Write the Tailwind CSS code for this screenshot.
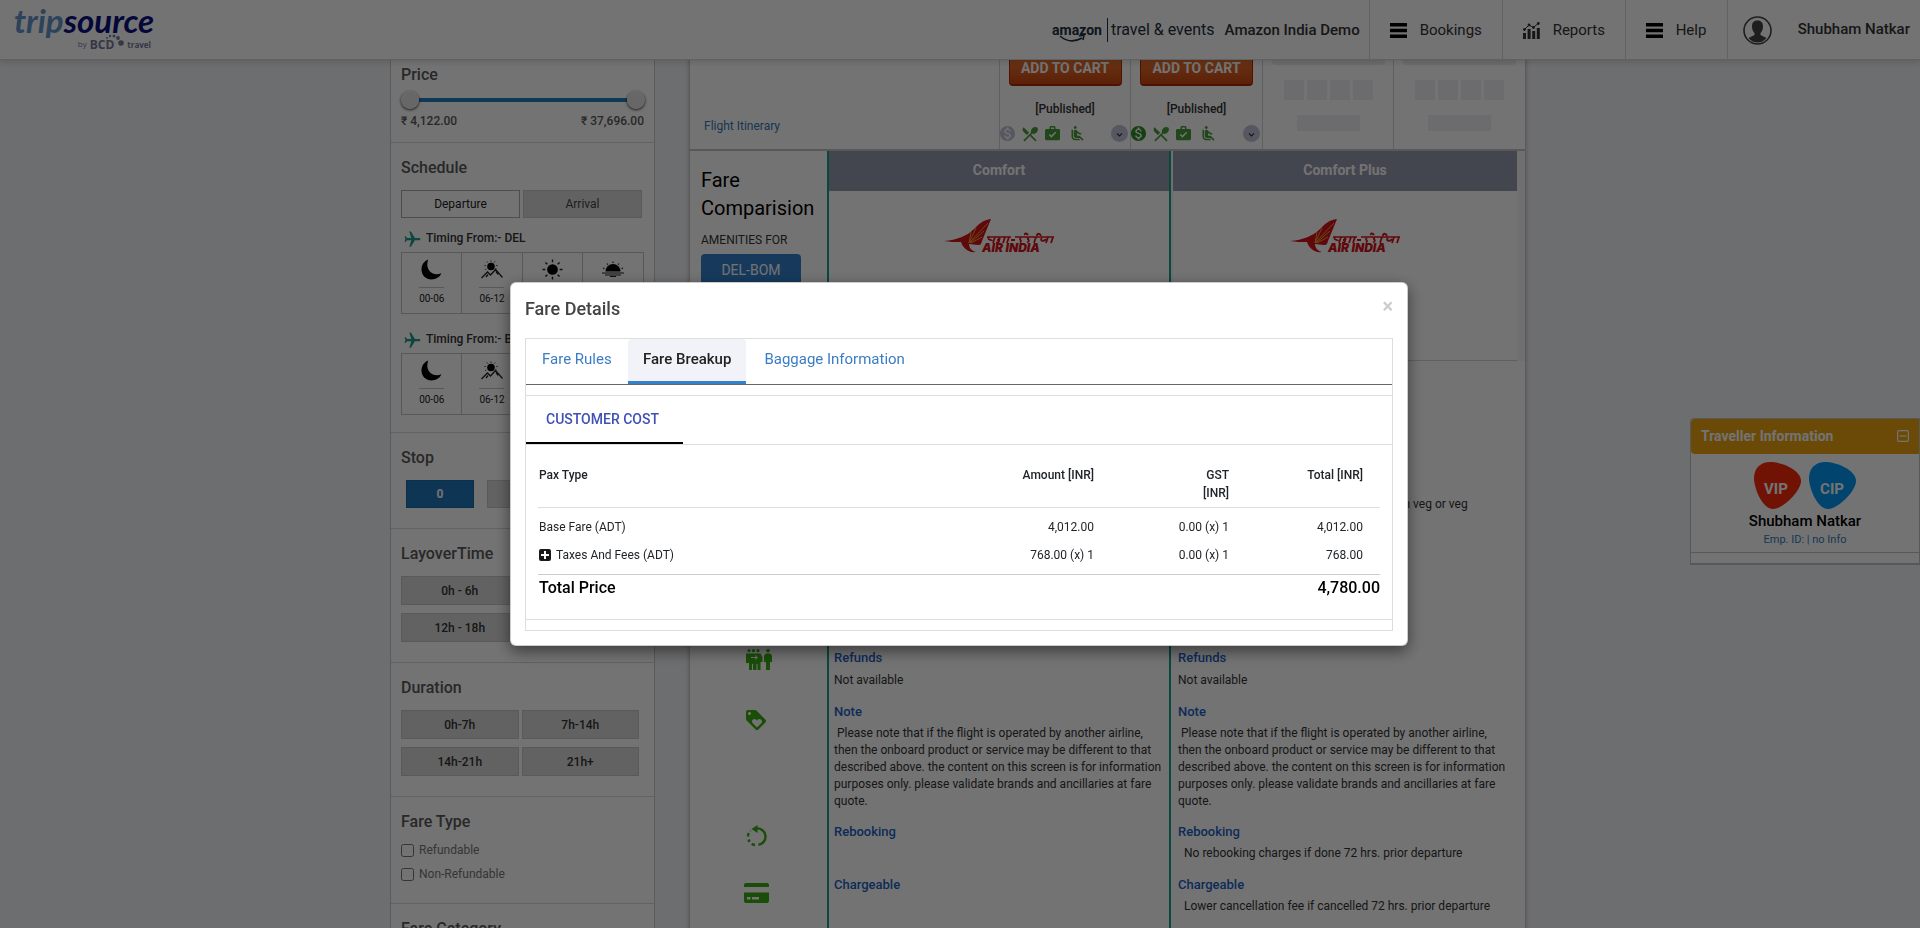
<!DOCTYPE html>
<html lang="en">
<head>
<meta charset="utf-8">
<title>tripsource – Fare Details</title>
<script src="https://cdn.jsdelivr.net/npm/@tailwindcss/browser@4"></script>
</head>
<body class="h-screen overflow-hidden flex flex-col bg-[#f2f3f6] font-['Roboto','Noto_Sans',sans-serif] text-xs text-[#333]">

<!-- shared icons -->
<svg class="hidden" aria-hidden="true">
  <symbol id="dollar" viewBox="2 2 20 20"><path d="M12 2C6.48 2 2 6.48 2 12s4.48 10 10 10 10-4.48 10-10S17.52 2 12 2zm1.41 16.09V20h-2.67v-1.93c-1.71-.36-3.16-1.46-3.27-3.4h1.96c.1 1.05.82 1.87 2.65 1.87 1.96 0 2.4-.98 2.4-1.59 0-.83-.44-1.61-2.67-2.14-2.48-.6-4.18-1.62-4.18-3.67 0-1.72 1.39-2.84 3.11-3.21V4h2.67v1.95c1.86.45 2.79 1.86 2.85 3.39H14.3c-.05-1.11-.64-1.87-2.22-1.87-1.5 0-2.4.68-2.4 1.64 0 .84.65 1.39 2.67 1.91s4.18 1.39 4.18 3.91c-.01 1.83-1.38 2.83-3.12 3.16z"/></symbol>
  <symbol id="dining" viewBox="2 2 20 20"><path d="M8.1 13.34l2.83-2.83L3.91 3.5c-1.56 1.56-1.56 4.09 0 5.66l4.19 4.18zm6.78-1.81c1.53.71 3.68.21 5.27-1.38 1.91-1.91 2.28-4.65.81-6.12-1.46-1.46-4.2-1.1-6.12.81-1.59 1.59-2.09 3.74-1.38 5.27L3.7 19.87l1.41 1.41L12 14.41l6.88 6.88 1.41-1.41L13.41 13l1.47-1.47z"/></symbol>
  <symbol id="bag" viewBox="2 2 20 20"><path d="M20 6h-4V4c0-1.1-.9-2-2-2h-4c-1.1 0-2 .9-2 2v2H4c-1.1 0-2 .9-2 2v11c0 1.1.9 2 2 2h16c1.1 0 2-.9 2-2V8c0-1.1-.9-2-2-2zM10 4h4v2h-4V4zm.5 13.5L7 14l1.41-1.41 2.09 2.08 5.09-5.09L17 11l-6.5 6.5z"/></symbol>
  <symbol id="seat" viewBox="2 2 20 20"><path d="M7.59 5.41c-.78-.78-.78-2.05 0-2.83.78-.78 2.05-.78 2.83 0 .78.78.78 2.05 0 2.83-.79.79-2.05.79-2.83 0zM6 16V7H4v9c0 2.76 2.24 5 5 5h6v-2H9c-1.66 0-3-1.34-3-3zm14 4.07L14.93 15H11.5v-3.68c1.4 1.15 3.6 2.16 5.5 2.16v-2.16c-1.66.02-3.61-.87-4.67-2.04l-1.4-1.55c-.19-.21-.43-.38-.69-.5-.29-.14-.62-.23-.96-.23h-.03C8.01 7 7 8.01 7 9.25V15c0 1.66 1.34 3 3 3h5.07l3.5 3.5L20 20.07z"/></symbol>
  <symbol id="chev" viewBox="0 0 17 17"><circle cx="8.500" cy="8.500" r="8.500" fill="#bfc2d4"/><path d="M6 8.500l2.500 2.500 2.500-2.500" fill="none" stroke="#333" stroke-width="1.100"/></symbol>
  <symbol id="plane" viewBox="0 0 24 24"><path transform="rotate(90 12 12)" d="M21 16v-2l-8-5V3.500c0-.83-.67-1.500-1.500-1.500S10 2.670 10 3.500V9l-8 5v2l8-2.500V19l-2 1.500V22l3.500-1 3.500 1v-1.500L13 19v-5.500l8 2.500z"/></symbol>
  <symbol id="moon" viewBox="0 0 22 22"><path d="M7.500.500C2.800 2.500.500 6.500.500 11c0 6 4.700 10.500 10.500 10.500 4.600 0 8.600-2.300 10.300-6.500C13 18.500 3.500 12 7.500.500z"/></symbol>
  <symbol id="sunrise" viewBox="0 0 22 18"><circle cx="10" cy="6" r="3.800"/><path d="M.500 17.500l6-6 3 3 5-5.500 7 8M7 14l-2 2.500M15 11l2 3" fill="none" stroke="currentColor" stroke-width="1.300"/><path d="M10 0v1.200M6 1l.7 1M14 1l-.7 1M3.500 5h1.200M15.300 5h1.200M4.200 9l1-.6M15.500 8.500l-1-.4" stroke="currentColor" stroke-width="1"/></symbol>
  <symbol id="sun" viewBox="0 0 22 22"><circle cx="11" cy="11" r="5.600"/><path d="M11 .500v3M11 18.500v3M.500 11h3M18.500 11h3M3.600 3.600l2 2M16.400 16.400l2 2M3.600 18.400l2-2M16.400 5.600l2-2" stroke="currentColor" stroke-width="1.500"/></symbol>
  <symbol id="sunset" viewBox="0 0 22 16"><path d="M3.500 10a7.500 7.500 0 0 1 15 0z"/><path d="M0 11.500h22M3 13.500h16" stroke="currentColor" stroke-width="1.200"/><path d="M8 15h6M11 0v1.500M5 2l.8 1.200M17 2l-.8 1.200M1 6.500l1.400.6M21 6.500l-1.400.6" stroke="currentColor" stroke-width="1.200"/></symbol>
  <symbol id="menu" viewBox="0 0 17 15"><path d="M0 0h17v3.600H0zM0 5.700h17v3.600H0zM0 11.400h17V15H0z"/></symbol>
  <symbol id="airindia" viewBox="0 0 110 34">
    <path d="M0 22c13-1 23-5 30-12 6-6 9-9 17-10l-9 22c-1 3-1 4-4 4l-9-1c0 4 3 7 7 8-8 1-13-4-15-10-6 0-11 0-17-1z" fill="#d3141b"/>
    <path d="M25 24l19-20M25 24l7-15M26 24l14-12M27 24l11-6M25 24l2-11" stroke="#f0a030" stroke-width="1" fill="none"/>
    <path d="M43 18h24M71 18h39" stroke="#d3141b" stroke-width="1.400"/>
    <path d="M45 18c-2 4 3 2 3 4M51 18l-2 6M54 19c4 1 0 2-1 2 4 0 2 3-1 2.500M61 18l-2 6M65 18l-2 6M67 21h4M77 19c-3 2 2 2-1 4.500M81 16c-1-2 2-2 3 0M85 19c-4 1 3 2-2 4.500M92 18l-2 6M93 17c0-3 3-3 4 0M98 19c-3 3 2 4 4 1M104 18l-2 6M109 18l-2 6" stroke="#d3141b" stroke-width="1.800" fill="none"/>
    <text x="38" y="33" font-family="Inter" font-size="12" font-weight="900" font-style="italic" fill="#d3141b">AIR INDIA</text>
  </symbol>
</svg>

<header class="relative z-10 h-[60px] shrink-0 flex items-stretch bg-white border-b border-[#d8d8de] shadow-[0_2px_6px_rgba(0,0,0,0.15)] text-[15px]">
  <a href="#" aria-label="tripsource by BCD travel" class="flex flex-col pl-[14px] pt-1 w-[160px]">
    <span class="font-['Lato'] font-bold italic text-[33px] leading-8 text-[#0a1080]"><span class="text-[#6494cc]">trip</span>source</span>
    <span class="flex items-center justify-end pr-[9px] h-[18px] text-[#7678a0] font-['Open_Sans'] leading-none">
      <span class="text-[8px] pr-[3px] pb-[3px]">by</span>
      <span class="relative font-bold text-xs pr-[11px]">BCD
        <svg class="absolute right-0 -top-[3px] w-[19px] h-3" viewBox="0 0 19 12" fill="currentColor"><circle cx="15" cy="9" r="2.800"/><circle cx="12" cy="4" r="1.900"/><circle cx="8" cy="2" r="1.500"/><circle cx="4" cy="2" r="1.200"/><circle cx="1" cy="4" r="1"/></svg>
      </span>
      <span class="text-[8px] font-bold pl-[2px]">travel</span>
    </span>
  </a>
  <div class="ml-auto flex items-center gap-[10px] pt-px pr-[9px]">
    <div class="flex items-center text-[#232f3e]">
      <span class="relative h-6 pr-[5px] font-bold text-[14px] leading-6">amazon
        <svg class="absolute left-[7px] top-[16px] w-[27px] h-[9px]" viewBox="0 0 27 9" fill="none" stroke="currentColor" stroke-width="1.600"><path d="M1 2c7 6 15 6 22 2M20 2l5-1-1 5"/></svg>
      </span>
      <span class="border-l border-[#232f3e] h-6 pl-[3px] text-[16px] leading-6">travel &amp; events</span>
    </div>
    <span class="font-medium pt-px">Amazon India Demo</span>
  </div>
  <nav class="flex">
    <a href="#" class="flex items-center gap-[13px] w-[133px] pt-[2px] pl-5 border-l border-[#d9d9d9]"><svg class="w-[17px] h-[15px]"><use href="#menu"/></svg>Bookings</a>
    <a href="#" class="flex items-center gap-[13px] w-[123px] pt-[2px] pl-5 border-l border-[#d9d9d9]"><svg class="w-[17px] h-[17px]" viewBox="0 0 17 17" fill="currentColor"><path d="M0 11h3v6H0zM4.600 7h3v10h-3zM9.200 9h3v8h-3zM13.800 6h3v11h-3z"/><path d="M1.500 7.500L6 3l4.500 2.500L15.500 1" stroke="currentColor" fill="none"/><circle cx="1.500" cy="7.500" r="1.400"/><circle cx="6" cy="3" r="1.400"/><circle cx="10.500" cy="5.500" r="1.400"/><circle cx="15.300" cy="1.500" r="1.400"/></svg>Reports</a>
    <a href="#" class="flex items-center gap-[13px] w-[102px] pt-[2px] pl-5 border-l border-[#d9d9d9]"><svg class="w-[17px] h-[15px]"><use href="#menu"/></svg>Help</a>
    <a href="#" class="flex items-center gap-[26px] pt-px pl-[15px] pr-[10px] border-l border-[#d9d9d9] font-medium">
      <svg class="w-[29px] h-[29px]" viewBox="0 0 29 29"><circle cx="14.500" cy="14.500" r="13.500" fill="none" stroke="#444" stroke-width="1.600"/><path d="M14.500 4.500c4 0 5.500 2.500 5.500 6 0 3-1.200 5.500-2.500 6.500v2l6 3c-2.500 3-5.500 4.500-9 4.500s-6.500-1.500-9-4.500l6-3v-2C10.200 16 9 13.500 9 10.500c0-3.500 1.500-6 5.500-6z" fill="#444"/></svg>
      Shubham Natkar</a>
  </nav>
</header>

<main class="flex-1 min-h-0 overflow-hidden">
  <div class="w-full max-w-[1140px] mx-auto flex items-start gap-[34px]">

    <!-- filters -->
    <aside class="w-[265px] shrink-0 bg-white border-x border-[#c9c9c9] text-[#444]">
      <section class="px-[10px] pt-[3px] pb-3 border-b border-[#d9d9d9]">
        <h2 class="text-base leading-6 font-medium text-[#5a5a5a]">Price</h2>
        <div class="relative h-[18px] mt-1 -mr-px flex items-center">
          <div class="w-full h-1 bg-[#2180c4]"></div>
          <input type="range" aria-label="Lowest price" min="0" max="100" value="0" class="absolute inset-0 w-full h-[18px] appearance-none bg-transparent pointer-events-none [&::-webkit-slider-thumb]:appearance-none [&::-webkit-slider-thumb]:size-[18px] [&::-webkit-slider-thumb]:rounded-full [&::-webkit-slider-thumb]:bg-[#e4e4e4] [&::-webkit-slider-thumb]:border [&::-webkit-slider-thumb]:border-[#f4f4f4] [&::-webkit-slider-thumb]:shadow-[0_1px_3px_rgba(0,0,0,0.8)]">
          <input type="range" aria-label="Highest price" min="0" max="100" value="100" class="absolute inset-0 w-full h-[18px] appearance-none bg-transparent pointer-events-none [&::-webkit-slider-thumb]:appearance-none [&::-webkit-slider-thumb]:size-[18px] [&::-webkit-slider-thumb]:rounded-full [&::-webkit-slider-thumb]:bg-[#e4e4e4] [&::-webkit-slider-thumb]:border [&::-webkit-slider-thumb]:border-[#f4f4f4] [&::-webkit-slider-thumb]:shadow-[0_1px_3px_rgba(0,0,0,0.8)]">
        </div>
        <div class="flex justify-between mt-[3px] leading-[18px] font-medium text-[#5a5a5a]"><span>₹ 4,122.00</span><span>₹ 37,696.00</span></div>
      </section>

      <section class="px-[10px] pt-[13px] pb-[17px] border-b border-[#d9d9d9]">
        <h2 class="text-base leading-6 font-medium text-[#5a5a5a]">Schedule</h2>
        <div class="mt-[10px] flex gap-[3px]">
          <button class="w-[119px] h-7 border border-[#aaa] text-[#222]">Departure</button>
          <button class="w-[119px] h-7 border border-[#c8c8c8] bg-[#d9d9d9]">Arrival</button>
        </div>
        <div class="mt-[11px] h-[18px] flex items-center gap-1 font-medium text-[#333]"><svg class="w-[19px] h-[19px] ml-[2px] mt-[2px] fill-[#1d9c90]"><use href="#plane"/></svg>Timing From:- DEL</div>
        <div class="mt-[5px] grid grid-cols-4 border border-[#c4c4c4] divide-x divide-[#c4c4c4] text-center text-[10px] leading-[14px] text-[#222] whitespace-nowrap">
          <button class="h-[60px] pb-[2px] flex flex-col items-center justify-center"><svg class="shrink-0 w-[21px] h-[21px]"><use href="#moon"/></svg><span class="mt-[7px] w-[25px] border-t border-[#c4c4c4] pt-1">00-06</span></button>
          <button class="h-[60px] pb-[2px] flex flex-col items-center justify-center"><svg class="shrink-0 w-[22px] h-[21px]"><use href="#sunrise"/></svg><span class="mt-[7px] w-[25px] border-t border-[#c4c4c4] pt-1">06-12</span></button>
          <button class="h-[60px] pb-[2px] flex flex-col items-center justify-center"><svg class="shrink-0 w-[21px] h-[21px]"><use href="#sun"/></svg><span class="mt-[7px] w-[25px] border-t border-[#c4c4c4] pt-1">12-18</span></button>
          <button class="h-[60px] pb-[2px] flex flex-col items-center justify-center"><svg class="shrink-0 w-[22px] h-[21px]"><use href="#sunset"/></svg><span class="mt-[7px] w-[25px] border-t border-[#c4c4c4] pt-1">18-24</span></button>
        </div>
        <div class="mt-4 h-[18px] flex items-center gap-1 font-medium text-[#333]"><svg class="w-[19px] h-[19px] ml-[2px] mt-[2px] fill-[#1d9c90]"><use href="#plane"/></svg>Timing From:- BOM</div>
        <div class="mt-[5px] grid grid-cols-4 border border-[#c4c4c4] divide-x divide-[#c4c4c4] text-center text-[10px] leading-[14px] text-[#222] whitespace-nowrap">
          <button class="h-[60px] pb-[2px] flex flex-col items-center justify-center"><svg class="shrink-0 w-[21px] h-[21px]"><use href="#moon"/></svg><span class="mt-[7px] w-[25px] border-t border-[#c4c4c4] pt-1">00-06</span></button>
          <button class="h-[60px] pb-[2px] flex flex-col items-center justify-center"><svg class="shrink-0 w-[22px] h-[21px]"><use href="#sunrise"/></svg><span class="mt-[7px] w-[25px] border-t border-[#c4c4c4] pt-1">06-12</span></button>
          <button class="h-[60px] pb-[2px] flex flex-col items-center justify-center"><svg class="shrink-0 w-[21px] h-[21px]"><use href="#sun"/></svg><span class="mt-[7px] w-[25px] border-t border-[#c4c4c4] pt-1">12-18</span></button>
          <button class="h-[60px] pb-[2px] flex flex-col items-center justify-center"><svg class="shrink-0 w-[22px] h-[21px]"><use href="#sunset"/></svg><span class="mt-[7px] w-[25px] border-t border-[#c4c4c4] pt-1">18-24</span></button>
        </div>
      </section>

      <section class="px-[10px] pt-[13px] pb-5 border-b border-[#d9d9d9]">
        <h2 class="text-base leading-6 font-medium text-[#5a5a5a]">Stop</h2>
        <div class="mt-[10px] ml-[5px] flex gap-[13px]">
          <button class="w-[68px] h-7 border border-[#1a6aa5] bg-[#2178bb] text-white font-bold">0</button>
          <button class="w-[68px] h-7 border border-[#c8c8c8] bg-[#d9d9d9] font-medium">1</button>
          <button class="w-[68px] h-7 border border-[#c8c8c8] bg-[#d9d9d9] font-medium">2+</button>
        </div>
      </section>

      <section class="px-[10px] pt-[13px] pb-5 border-b border-[#d9d9d9]">
        <h2 class="text-base leading-6 font-medium text-[#5a5a5a]">LayoverTime</h2>
        <div class="mt-[10px] mr-[5px] grid grid-cols-2 gap-x-[3px] gap-y-2 font-medium text-[#333]">
          <button class="h-[29px] border border-[#c8c8c8] bg-[#d9d9d9]">0h - 6h</button>
          <button class="h-[29px] border border-[#c8c8c8] bg-[#d9d9d9]">6h - 12h</button>
          <button class="h-[29px] border border-[#c8c8c8] bg-[#d9d9d9]">12h - 18h</button>
          <button class="h-[29px] border border-[#c8c8c8] bg-[#d9d9d9]">18h+</button>
        </div>
      </section>

      <section class="px-[10px] pt-[13px] pb-5 border-b border-[#d9d9d9]">
        <h2 class="text-base leading-6 font-medium text-[#5a5a5a]">Duration</h2>
        <div class="mt-[10px] mr-[5px] grid grid-cols-2 gap-x-[3px] gap-y-2 font-medium text-[#333]">
          <button class="h-[29px] border border-[#c8c8c8] bg-[#d9d9d9]">0h-7h</button>
          <button class="h-[29px] border border-[#c8c8c8] bg-[#d9d9d9]">7h-14h</button>
          <button class="h-[29px] border border-[#c8c8c8] bg-[#d9d9d9]">14h-21h</button>
          <button class="h-[29px] border border-[#c8c8c8] bg-[#d9d9d9]">21h+</button>
        </div>
      </section>

      <section class="px-[10px] pt-[13px] pb-5 border-b border-[#d9d9d9]">
        <h2 class="text-base leading-6 font-medium text-[#5a5a5a]">Fare Type</h2>
        <div class="mt-[7px] flex flex-col gap-[6px] text-[#777]">
          <label class="flex items-center gap-[5px] h-[18px]"><input type="checkbox" class="size-[13px] m-0">Refundable</label>
          <label class="flex items-center gap-[5px] h-[18px]"><input type="checkbox" class="size-[13px] m-0">Non-Refundable</label>
        </div>
      </section>

      <section class="px-[10px] pt-[13px] pb-5">
        <h2 class="text-base leading-6 font-medium text-[#5a5a5a]">Fare Category</h2>
      </section>
    </aside>

    <!-- flight result and fare comparison -->
    <section class="w-[837px] -mt-[9px] bg-white border-x border-[#c9c9c9] shadow-[0_0_4px_rgba(0,0,0,0.25)]">
      <div class="grid grid-cols-[1fr_131px_132px_131px_132px] h-[100px] border-b-2 border-[#c4c4c4]">
        <a href="#" class="self-end pl-[14px] pb-[14px] leading-[18px] text-[#337ab7]">Flight Itinerary</a>
        <div class="border-l border-[#d4d4d4] flex flex-col items-center">
          <button class="w-[113px] h-[35px] rounded-sm border border-b-2 border-[#a82c00] bg-linear-to-b from-[#f07f36] to-[#cc4813] text-white font-bold text-sm leading-none">ADD TO CART</button>
          <span class="mt-[14px] leading-[18px] font-medium">[Published]</span>
          <div class="mt-[7px] w-full flex items-center gap-[7px] fill-[#4a9b38]"><svg class="size-[15px] fill-[#bfc2d4]"><use href="#dollar"/></svg><svg class="size-4"><use href="#dining"/></svg><svg class="size-[15px]"><use href="#bag"/></svg><svg class="size-[15px] ml-[3px]"><use href="#seat"/></svg><svg class="size-[17px] ml-auto mr-[2px]"><use href="#chev"/></svg></div>
        </div>
        <div class="border-l border-[#d4d4d4] flex flex-col items-center">
          <button class="w-[113px] h-[35px] rounded-sm border border-b-2 border-[#a82c00] bg-linear-to-b from-[#f07f36] to-[#cc4813] text-white font-bold text-sm leading-none">ADD TO CART</button>
          <span class="mt-[14px] leading-[18px] font-medium">[Published]</span>
          <div class="mt-[7px] w-full flex items-center gap-[7px] fill-[#4a9b38]"><svg class="size-[15px] fill-[#2f8f2a]"><use href="#dollar"/></svg><svg class="size-4"><use href="#dining"/></svg><svg class="size-[15px]"><use href="#bag"/></svg><svg class="size-[15px] ml-[3px]"><use href="#seat"/></svg><svg class="size-[17px] ml-auto mr-[2px]"><use href="#chev"/></svg></div>
        </div>
        <div class="border-l border-[#d4d4d4] flex flex-col items-center">
          <div class="w-[113px] h-[14px] rounded-b bg-[#efeff3]"></div>
          <div class="mt-[15px] flex gap-[3px]"><i class="size-5 bg-[#efeff3]"></i><i class="size-5 bg-[#efeff3]"></i><i class="size-5 bg-[#efeff3]"></i><i class="size-5 bg-[#efeff3]"></i></div>
          <div class="mt-[15px] w-[63px] h-4 bg-[#efeff3]"></div>
        </div>
        <div class="border-l border-[#d4d4d4] flex flex-col items-center">
          <div class="w-[113px] h-[14px] rounded-b bg-[#efeff3]"></div>
          <div class="mt-[15px] flex gap-[3px]"><i class="size-5 bg-[#efeff3]"></i><i class="size-5 bg-[#efeff3]"></i><i class="size-5 bg-[#efeff3]"></i><i class="size-5 bg-[#efeff3]"></i></div>
          <div class="mt-[15px] w-[63px] h-4 bg-[#efeff3]"></div>
        </div>
      </div>

      <div class="grid grid-cols-[137px_344px_1fr]">
        <div class="pl-[11px] pt-[15px]">
          <h2 class="text-xl leading-7 text-black">Fare Comparision</h2>
          <p class="mt-[9px] leading-[18px]">AMENITIES FOR</p>
          <button class="mt-[5px] w-[100px] h-[34px] pb-[2px] rounded-sm bg-[#3380cc] text-white text-sm">DEL-BOM</button>
        </div>
        <div class="h-[210px] border-x-2 border-[#12a08c] flex flex-col items-center">
          <div class="w-full h-10 bg-[#979bb0] text-white font-bold text-sm leading-[38px] text-center">Comfort</div>
          <svg class="mt-7 w-[110px] h-[34px]"><use href="#airindia"/></svg>
        </div>
        <div class="h-[210px] pl-[2px] pr-2 bg-[#f6f6f6]">
          <div class="h-full bg-white border-b border-[#d4d4d4] flex flex-col items-center">
            <div class="w-full h-10 bg-[#979bb0] text-white font-bold text-sm leading-[38px] text-center">Comfort Plus</div>
            <svg class="mt-7 w-[110px] h-[34px]"><use href="#airindia"/></svg>
          </div>
        </div>
      </div>

      <div class="grid grid-cols-[137px_344px_1fr] leading-[17px]">
        <div></div>
        <div class="border-x-2 border-[#12a08c]"></div>
        <p class="pt-[135px] pb-[136px] pl-[219px]">non veg or veg</p>
      </div>

      <div class="grid grid-cols-[137px_344px_1fr] leading-[17px]">
        <div class="flex justify-center"><svg class="w-[26px] h-[21px] fill-[#38ac12]" viewBox="0 0 26 21"><circle cx="3" cy="1.700" r="1.600"/><circle cx="7.500" cy="1.700" r="1.600"/><circle cx="12" cy="1.700" r="1.600"/><circle cx="22" cy="1.700" r="1.800"/><path d="M0 4.500h14.500l2 3.500v5h-2v8h-3v-6h-1v6h-3.500v-6h-1v6H3v-7H0z"/><path d="M20 4.500h4l2 2V13h-2v8h-4v-8h-2V6.500z"/><path d="M5 8.500h6M9 6.500l2.500 2L9 10.500" stroke="#fff" stroke-width="1" fill="none"/></svg></div>
        <div class="border-x-2 border-[#12a08c] pl-[5px] pb-[14px]"><h3 class="text-[13px] leading-[18px] font-medium text-[#1c5fc4]">Refunds</h3><p class="mt-[5px]">Not available</p></div>
        <div class="pl-[7px] pb-[14px]"><h3 class="text-[13px] leading-[18px] font-medium text-[#1c5fc4]">Refunds</h3><p class="mt-[5px]">Not available</p></div>
      </div>
      <div class="grid grid-cols-[137px_344px_1fr] leading-[17px]">
        <div class="flex justify-center pr-[5px]"><svg class="size-5 mt-[7px] fill-[#38ac12]" viewBox="2 2 20 20"><path d="M21.410 11.580l-9-9C12.050 2.220 11.550 2 11 2H4c-1.100 0-2 .9-2 2v7c0 .55.220 1.050.590 1.420l9 9c.36.36.86.58 1.410.58.55 0 1.050-.22 1.410-.59l7-7c.37-.36.59-.86.59-1.410 0-.55-.23-1.060-.59-1.420zM5.500 7C4.670 7 4 6.330 4 5.500S4.670 4 5.500 4 7 4.670 7 5.500 6.330 7 5.500 7zm11.770 8.270L13 19.540l-4.270-4.270C8.280 14.810 8 14.190 8 13.500c0-1.380 1.120-2.500 2.500-2.500.69 0 1.320.28 1.770.74l.73.72.73-.73c.45-.45 1.080-.73 1.770-.73 1.380 0 2.500 1.120 2.500 2.500 0 .69-.28 1.320-.73 1.770z"/></svg></div>
        <div class="border-x-2 border-[#12a08c] pl-[5px] pb-[13px]"><h3 class="text-[13px] leading-[18px] font-medium text-[#1c5fc4]">Note</h3><p class="mt-1">&nbsp;Please note that if the flight is operated by another airline, then the onboard product or service may be different to that described above. the content on this screen is for information purposes only. please validate brands and ancillaries at fare quote.</p></div>
        <div class="pl-[7px] pr-4 pb-[13px]"><h3 class="text-[13px] leading-[18px] font-medium text-[#1c5fc4]">Note</h3><p class="mt-1">&nbsp;Please note that if the flight is operated by another airline, then the onboard product or service may be different to that described above. the content on this screen is for information purposes only. please validate brands and ancillaries at fare quote.</p></div>
      </div>
      <div class="grid grid-cols-[137px_344px_1fr] leading-[17px]">
        <div class="flex justify-center pr-[5px]"><svg class="w-[21px] h-[22px] mt-[2px]" viewBox="0 0 21 22"><path d="M10 3.500a8.200 8.200 0 0 1 2.500 16.300" fill="none" stroke="#38ac12" stroke-width="2.400"/><path d="M9 20a8.200 8.200 0 0 1-6.500-5.500M2 11.500a8.200 8.200 0 0 1 2.500-6" fill="none" stroke="#38ac12" stroke-width="2.400" stroke-dasharray="3.600 2.600"/><path d="M11.500 0v8L5.500 4z" fill="#38ac12"/></svg></div>
        <div class="border-x-2 border-[#12a08c] pl-[5px] pb-[14px]"><h3 class="text-[13px] leading-[18px] font-medium text-[#1c5fc4]">Rebooking</h3></div>
        <div class="pl-[7px] pb-[14px]"><h3 class="text-[13px] leading-[18px] font-medium text-[#1c5fc4]">Rebooking</h3><p class="mt-1 pl-[6px]">No rebooking charges if done 72 hrs. prior departure</p></div>
      </div>
      <div class="grid grid-cols-[137px_344px_1fr] leading-[17px]">
        <div class="flex justify-center pr-[5px]"><svg class="w-[25px] h-5 mt-[7px] fill-[#38ac12]" viewBox="0 0 25 20"><path d="M2 0h21a2 2 0 0 1 2 2v2H0V2a2 2 0 0 1 2-2z"/><path fill-rule="evenodd" d="M0 9.500h25V18a2 2 0 0 1-2 2H2a2 2 0 0 1-2-2zM3 14v2.500h3.500V14zm5 0v2.500h7V14z"/></svg></div>
        <div class="border-x-2 border-[#12a08c] pl-[5px] pb-[14px]"><h3 class="text-[13px] leading-[18px] font-medium text-[#1c5fc4]">Chargeable</h3></div>
        <div class="pl-[7px] pb-[14px]"><h3 class="text-[13px] leading-[18px] font-medium text-[#1c5fc4]">Chargeable</h3><p class="mt-1 pl-[6px]">Lower cancellation fee if cancelled 72 hrs. prior departure</p></div>
      </div>
    </section>
  </div>
</main>

<!-- traveller panel docked to the right edge -->
<aside class="fixed right-0 top-[418px] w-[230px] border border-[#c4c4c4] border-b-2 bg-white rounded-tl">
  <div class="h-[35px] px-[10px] pb-px flex items-center justify-between bg-[#eda412] rounded-l text-white">
    <h2 class="font-bold text-sm">Traveller Information</h2>
    <button aria-label="Collapse"><svg class="block size-3" viewBox="0 0 12 12" fill="none" stroke="#fff" stroke-width="1.200"><rect x=".6" y=".6" width="10.800" height="10.800" rx="1.500"/><path d="M2.500 6h7"/></svg></button>
  </div>
  <div class="pt-2 pb-1 flex flex-col items-center border-b border-[#c4c4c4]">
    <svg class="w-[102px] h-12" viewBox="0 0 102 48">
      <path d="M0 16C0 6 7 0 16 0c12 0 31 8 31 19C47 29 29 47 19 47 8 47 0 26 0 16z" fill="#f82c0c"/>
      <path d="M55 16C55 6 62 0 71 0c12 0 31 8 31 19 0 10-18 28-28 28C63 47 55 26 55 16z" fill="#0497f4"/>
      <text x="22" y="32" text-anchor="middle" font-family="Roboto" font-size="15" font-weight="700" fill="#fff">VIP</text>
      <text x="78" y="32" text-anchor="middle" font-family="Roboto" font-size="15" font-weight="700" fill="#fff">CIP</text>
    </svg>
    <div class="mt-px text-[15px] leading-5 font-medium text-black">Shubham Natkar</div>
    <a href="#" class="mt-px leading-4 text-[11px] text-[#337ab7]">Emp. ID: | no Info</a>
  </div>
  <div class="h-[10px]"></div>
</aside>

<!-- fare details dialog -->
<div class="fixed inset-0 z-20 bg-black/55 pr-[2px]">
  <div role="dialog" aria-labelledby="dlg" class="mt-[282px] mx-auto w-full max-w-[898px] bg-white rounded-md border border-black/20 shadow-[0_5px_15px_rgba(0,0,0,0.5)] px-[14px] pb-[14px]">
    <div class="h-[55px] flex items-start justify-between pt-[15px]">
      <h1 id="dlg" class="text-lg leading-[22px] font-medium text-[#444]">Fare Details</h1>
      <button aria-label="Close" class="text-[20px] leading-4 font-bold text-[#ccc]">×</button>
    </div>
    <div class="border border-[#ddd] pb-[10px]">
      <div class="flex h-[46px] border-b border-[#666] text-[15px] leading-[38px] text-[#3b7dc4]">
        <button class="w-[102px] pr-[19px] pl-4 whitespace-nowrap pb-[5px]">Fare Rules</button>
        <button class="px-[15px] pb-[3px] rounded-t bg-[#f2f3f8] border-b-3 border-[#3481cc] font-medium text-[#222]">Fare Breakup</button>
        <button class="pl-[18px] pb-[5px]">Baggage Information</button>
      </div>
      <div class="mt-[10px] border-y border-[#ddd]">
        <div class="h-[49px] border-b border-[#ddd]">
          <button class="h-12 w-[157px] pr-1 border-b-2 border-black text-sm font-medium text-[#3f51b5]">CUSTOMER COST</button>
        </div>
        <div class="px-3 pt-[21px] pb-5">
          <table class="w-full table-fixed text-right text-[#212529] leading-[18px]">
            <colgroup><col><col class="w-[180px]"><col class="w-[135px]"><col class="w-[151px]"></colgroup>
            <thead class="font-medium align-top border-b border-[#ddd]">
              <tr><th class="text-left font-medium pl-px pb-[5px]">Pax Type</th><th class="font-medium pb-[5px]">Amount [INR]</th><th class="font-medium pl-24 pb-[5px]">GST [INR]</th><th class="font-medium pr-[17px] pb-[5px]">Total [INR]</th></tr>
            </thead>
            <tbody class="border-b border-[#ccc]">
              <tr class="h-[34px]"><td class="text-left pl-px pt-1">Base Fare (ADT)</td><td class="pt-1">4,012.00</td><td class="pt-1">0.00 (x) 1</td><td class="pr-[17px] pt-1">4,012.00</td></tr>
              <tr class="h-[33px] align-top"><td class="text-left pl-px"><span class="flex items-center gap-[5px] pt-1"><button aria-label="Show taxes"><svg class="block size-3" viewBox="0 0 12 12"><rect width="12" height="12" rx="2" fill="#1a1a1a"/><path d="M6 2v8M2 6h8" stroke="#fff" stroke-width="2"/></svg></button>Taxes And Fees (ADT)</span></td><td class="pt-1">768.00 (x) 1</td><td class="pt-1">0.00 (x) 1</td><td class="pr-[17px] pt-1">768.00</td></tr>
            </tbody>
            <tfoot class="text-base leading-[22px] text-black">
              <tr><th class="text-left font-medium pl-px pt-[2px]">Total Price</th><td class="font-medium pt-[2px]" colspan="3">4,780.00</td></tr>
            </tfoot>
          </table>
        </div>
      </div>
    </div>
  </div>
</div>
</body>
</html>
